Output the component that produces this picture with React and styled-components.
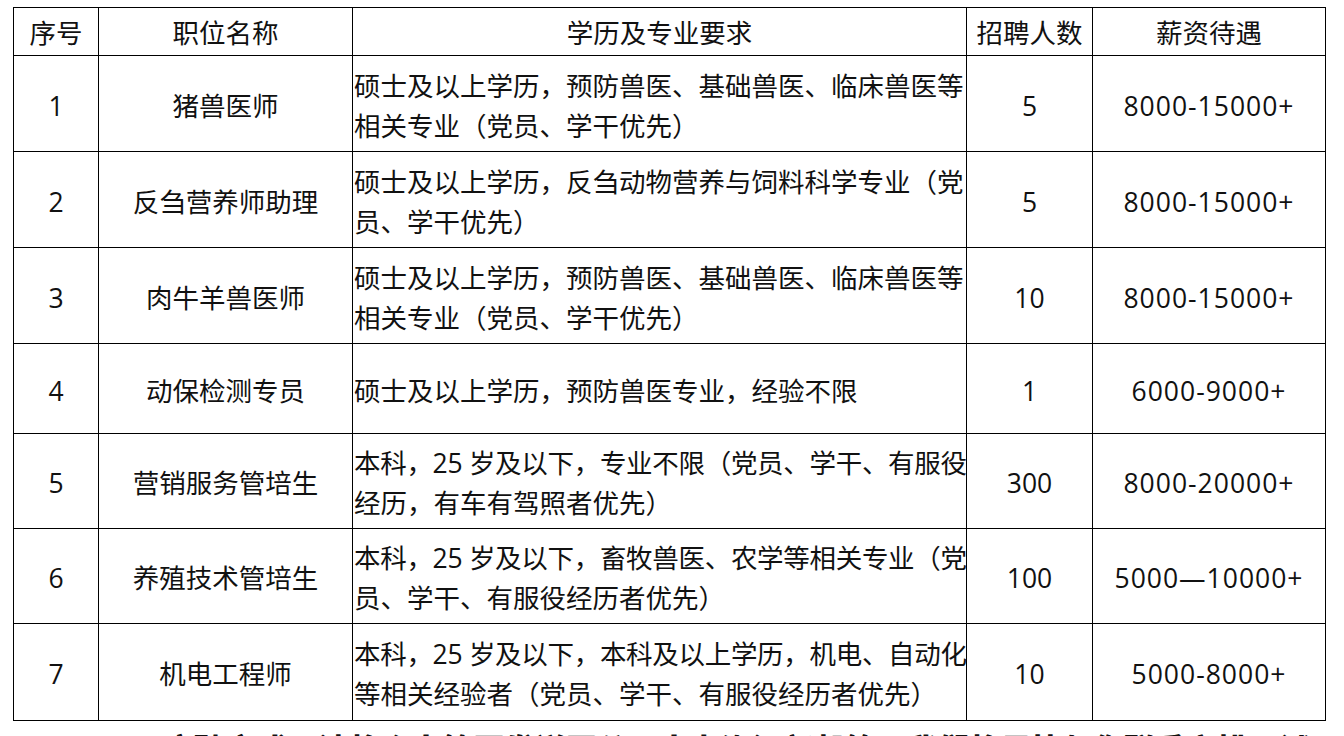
import React from "react";
import styled, { createGlobalStyle } from "styled-components";

const GlobalStyle = createGlobalStyle`
  html, body {
    margin: 0;
    padding: 0;
    background: #fff;
    overflow: hidden;
  }
  body {
    font-family: "Open Sans", "Noto Sans CJK SC", sans-serif;
    color: #111;
  }
`;

const Page = styled.div`
  padding: 7px 0 0 13px;
  width: 1344px;
  height: 736px;
  box-sizing: border-box;
`;

const Table = styled.table`
  border-collapse: collapse;
  table-layout: fixed;
  width: 1312px;
  font-size: 26.5px;
  line-height: 40px;
`;

const Th = styled.th`
  border: 1.6px solid #000;
  height: 44px;
  padding: 3px 0 0;
  font-weight: 400;
  text-align: center;
  vertical-align: middle;
  white-space: nowrap;
`;

const Row = styled.tr`
  height: ${(p) => p.$h}px;
`;

const Td = styled.td`
  border: 1.6px solid #000;
  padding: 4px 0 0 ${(p) => (p.$left ? "1px" : "0")};
  text-align: ${(p) => (p.$left ? "left" : "center")};
  letter-spacing: ${(p) => (p.$num ? "1px" : "0")};
  vertical-align: middle;
  white-space: nowrap;
  overflow: visible;
`;

const Line = styled.div`
  letter-spacing: ${(p) => (p.$tight ? "-0.3px" : "0")};
`;

const Footer = styled.div`
  margin: 9px 0 0 150px;
  font-family: "Noto Sans CJK SC", sans-serif;
  font-weight: 900;
  font-size: 31px;
  line-height: 36px;
  white-space: nowrap;
  color: #111;
`;

const rows = [
  { n: "1", title: "猪兽医师", desc: ["硕士及以上学历，预防兽医、基础兽医、临床兽医等", "相关专业（党员、学干优先）"], num: "5", pay: "8000-15000+", h: 96 },
  { n: "2", title: "反刍营养师助理", desc: ["硕士及以上学历，反刍动物营养与饲料科学专业（党", "员、学干优先）"], num: "5", pay: "8000-15000+", h: 96 },
  { n: "3", title: "肉牛羊兽医师", desc: ["硕士及以上学历，预防兽医、基础兽医、临床兽医等", "相关专业（党员、学干优先）"], num: "10", pay: "8000-15000+", h: 96 },
  { n: "4", title: "动保检测专员", desc: ["硕士及以上学历，预防兽医专业，经验不限"], num: "1", pay: "6000-9000+", h: 90 },
  { n: "5", title: "营销服务管培生", desc: ["本科，25 岁及以下，专业不限（党员、学干、有服役", "经历，有车有驾照者优先）"], num: "300", pay: "8000-20000+", h: 95 },
  { n: "6", title: "养殖技术管培生", desc: ["本科，25 岁及以下，畜牧兽医、农学等相关专业（党", "员、学干、有服役经历者优先）"], num: "100", pay: "5000—10000+", h: 95 },
  { n: "7", title: "机电工程师", desc: ["本科，25 岁及以下，本科及以上学历，机电、自动化", "等相关经验者（党员、学干、有服役经历者优先）"], num: "10", pay: "5000-8000+", h: 97 },
];

export default function App() {
  return (
    <Page>
      <GlobalStyle />
      <Table>
        <colgroup>
          <col style={{ width: 85 }} />
          <col style={{ width: 254 }} />
          <col style={{ width: 614 }} />
          <col style={{ width: 126 }} />
          <col style={{ width: 233 }} />
        </colgroup>
        <thead>
          <tr>
            <Th>序号</Th>
            <Th>职位名称</Th>
            <Th>学历及专业要求</Th>
            <Th>招聘人数</Th>
            <Th>薪资待遇</Th>
          </tr>
        </thead>
        <tbody>
          {rows.map((r) => (
            <Row key={r.n} $h={r.h}>
              <Td>{r.n}</Td>
              <Td>{r.title}</Td>
              <Td $left>
                {r.desc.map((line, i) => (
                  <Line key={i} $tight={line.startsWith("本科")}>{line}</Line>
                ))}
              </Td>
              <Td>{r.num}</Td>
              <Td $num>{r.pay}</Td>
            </Row>
          ))}
        </tbody>
      </Table>
      <Footer>应聘方式：请将个人简历发送至公司人力资源部邮箱，我们将尽快与您联系安排面试</Footer>
    </Page>
  );
}
